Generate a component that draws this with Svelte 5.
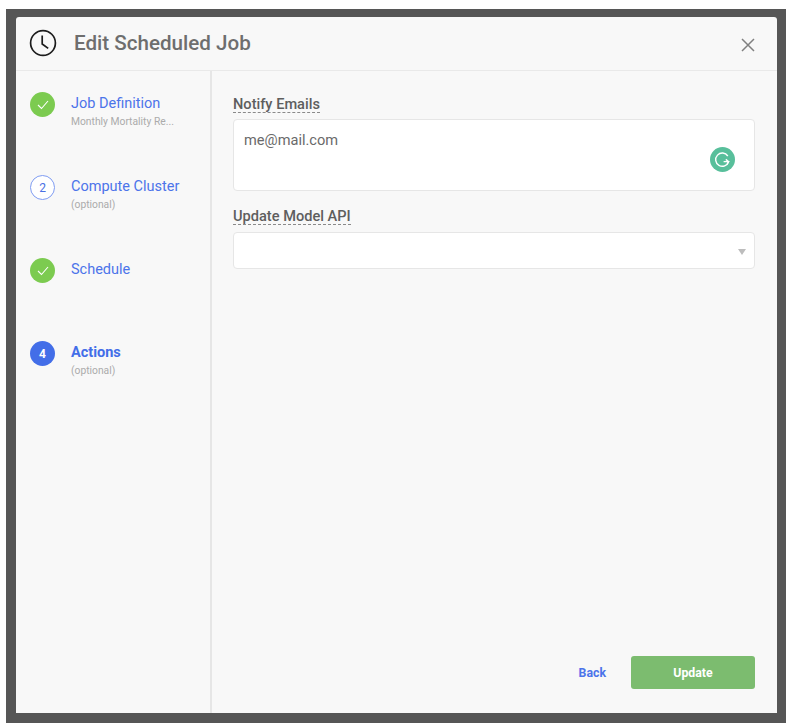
<script>
  const steps = [
    { label: 'Job Definition', sub: 'Monthly Mortality Re...', state: 'done' },
    { label: 'Compute Cluster', sub: '(optional)', state: 'todo', n: 2 },
    { label: 'Schedule', sub: '', state: 'done' },
    { label: 'Actions', sub: '(optional)', state: 'active', n: 4 }
  ];
</script>

<div class="frame">
  <div class="modal">
    <header class="head">
      <svg class="clock" width="28" height="28" viewBox="0 0 28 28" fill="none" stroke="#1c1c1c" stroke-width="1.7">
        <circle cx="14" cy="14" r="12.4" />
        <path d="M13.2 6.5V15l6 4.4" />
      </svg>
      <h1>Edit Scheduled Job</h1>
      <svg class="close" width="14" height="14" viewBox="0 0 14 14" fill="none" stroke="#808080" stroke-width="1.5">
        <path d="M1 1l12 12M13 1L1 13" />
      </svg>
    </header>
    <div class="body">
      <aside class="side">
        {#each steps as s}
          <div class="step">
            <span class="dot {s.state}">
              {#if s.state === 'done'}
                <svg width="12" height="10" viewBox="0 0 12 10" fill="none" stroke="#fff" stroke-width="1.1">
                  <path d="M1 5l3.5 3.5L11 1" />
                </svg>
              {:else}
                {s.n}
              {/if}
            </span>
            <div class="txt">
              <div class="label" class:on={s.state === 'active'}>{s.label}</div>
              {#if s.sub}<div class="sub">{s.sub}</div>{/if}
            </div>
          </div>
        {/each}
      </aside>
      <main class="main">
        <div class="fields">
          <span class="flabel">Notify Emails</span>
          <div class="box area">
            <span>me@mail.com</span>
            <svg class="gram" width="25" height="25" viewBox="0 0 25 25" fill="none">
              <circle cx="12.5" cy="12.5" r="12.5" fill="#58bf9b" />
              <path d="M17.8 9a6.6 6.6 0 1 0 .8 5.6h-5" stroke="#fff" stroke-width="1.4" />
              <path d="M15.8 12.4l2.8 2.2-1.6 2.9" stroke="#fff" stroke-width="1.4" />
            </svg>
          </div>
          <span class="flabel second">Update Model API</span>
          <div class="box select"><i class="caret"></i></div>
        </div>
        <footer class="foot">
          <span class="back">Back</span>
          <span class="update">Update</span>
        </footer>
      </main>
    </div>
  </div>
</div>

<style>
  :global(body) {
    margin: 0;
    background: #fff;
  }
  .frame {
    box-sizing: border-box;
    width: 780px;
    height: 714px;
    margin: 9px 0 0 6px;
    padding: 8px 9px 10px 10px;
    background: #565656;
    font-family: Roboto, "Liberation Sans", sans-serif;
  }
  .modal {
    height: 100%;
    display: flex;
    flex-direction: column;
    background: #f8f8f8;
    border-radius: 3px 3px 0 0;
  }
  .head {
    flex: none;
    box-sizing: border-box;
    height: 54px;
    display: flex;
    align-items: center;
    padding: 0 22px 0 13px;
    border-bottom: 1px solid #e9e9e9;
  }
  .clock {
    flex: none;
    margin-top: -2px;
  }
  h1 {
    flex: 1;
    margin: 0 0 2px 17px;
    font-size: 20.6px;
    font-weight: 500;
    color: #6e6e6e;
  }
  .close {
    margin-top: 3px;
  }
  .body {
    flex: 1;
    display: flex;
    min-height: 0;
  }
  .side {
    flex: none;
    box-sizing: border-box;
    width: 196px;
    padding-top: 21px;
    border-right: 2px solid #e6e6e6;
  }
  .step {
    height: 83px;
    display: flex;
    padding-left: 14px;
  }
  .dot {
    flex: none;
    box-sizing: border-box;
    width: 25px;
    height: 25px;
    border-radius: 50%;
    display: flex;
    align-items: center;
    justify-content: center;
    font-size: 12px;
  }
  .done {
    background: #7ccb50;
  }
  .todo {
    border: 1.5px solid #7f9cf2;
    background: #fff;
    color: #4a6fe3;
  }
  .active {
    background: #436ee8;
    color: #fff;
    font-weight: 700;
  }
  .txt {
    margin-left: 16px;
  }
  .label {
    font-size: 14.5px;
    line-height: 17px;
    margin-top: 3px;
    color: #4c74ea;
  }
  .label.on {
    font-weight: 700;
    color: #436ee8;
  }
  .sub {
    font-size: 10.3px;
    line-height: 12px;
    margin-top: 4px;
    color: #ababab;
  }
  .main {
    flex: 1;
    display: flex;
    flex-direction: column;
    justify-content: space-between;
    padding: 25px 22px 24px 21px;
  }
  .fields {
    display: flex;
    flex-direction: column;
    align-items: flex-start;
  }
  .flabel {
    font-size: 14.6px;
    line-height: 16px;
    font-weight: 500;
    color: #5e5e5e;
    border-bottom: 1px dashed #8a8a8a;
  }
  .second {
    margin-top: 17px;
  }
  .box {
    box-sizing: border-box;
    width: 100%;
    background: #fff;
    border: 1px solid #e6e6e6;
    border-radius: 4px;
  }
  .area {
    height: 72px;
    margin-top: 6px;
    padding: 11px 10px;
    display: flex;
    justify-content: space-between;
    font-size: 14.6px;
    line-height: 18px;
    color: #6a6a6a;
  }
  .gram {
    margin: 16px 9px 0 0;
  }
  .select {
    height: 37px;
    margin-top: 7px;
    display: flex;
    align-items: center;
    justify-content: flex-end;
    padding-right: 8px;
  }
  .caret {
    margin-top: 2px;
    border-left: 4.5px solid transparent;
    border-right: 4.5px solid transparent;
    border-top: 6px solid #bdbdbd;
  }
  .foot {
    display: flex;
    align-items: center;
    justify-content: flex-end;
  }
  .back {
    margin-right: 25px;
    font-size: 12.3px;
    font-weight: 700;
    color: #4c74ea;
  }
  .update {
    box-sizing: border-box;
    width: 124px;
    height: 33px;
    display: flex;
    align-items: center;
    justify-content: center;
    border-radius: 3px;
    background: #7cbc6f;
    color: #fff;
    font-size: 12.3px;
    font-weight: 700;
  }
</style>
